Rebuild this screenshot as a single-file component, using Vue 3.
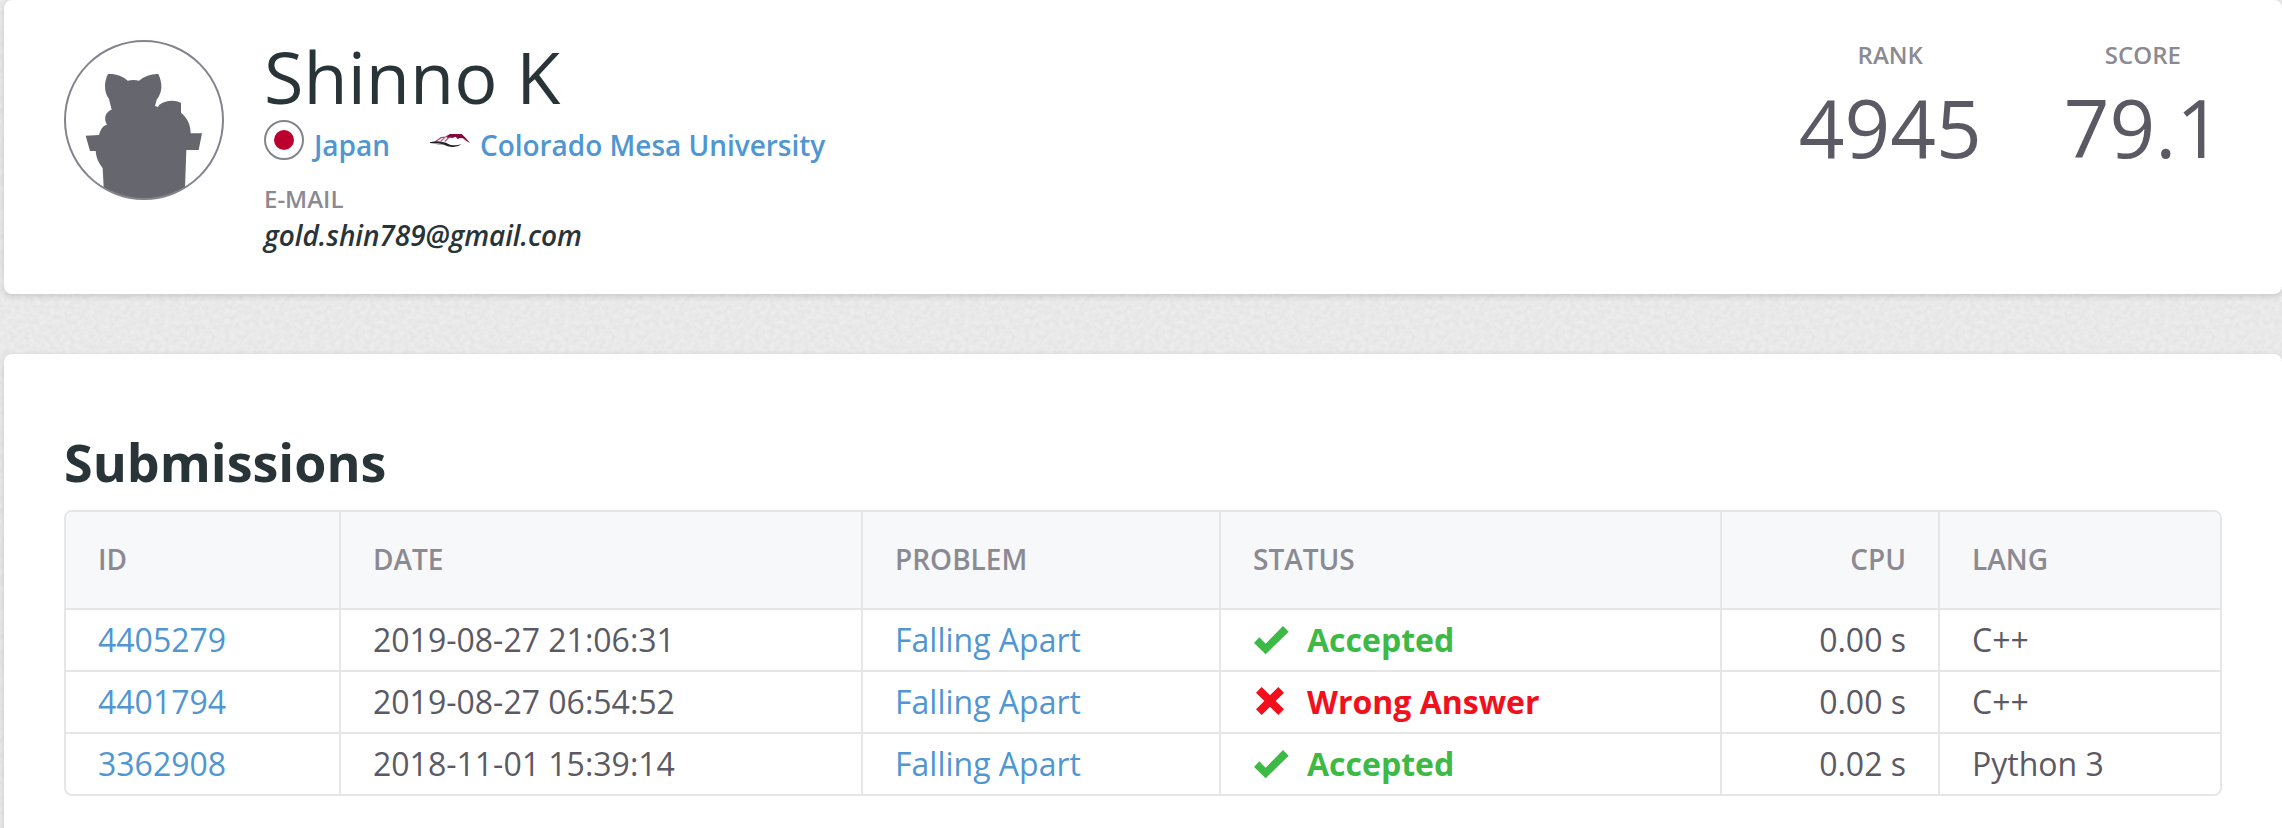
<script setup>
const stats = [
  { label: 'Rank', value: '4945' },
  { label: 'Score', value: '79.1' },
]

const submissions = [
  { id: '4405279', date: '2019-08-27 21:06:31', problem: 'Falling Apart', status: 'Accepted', ok: true, cpu: '0.00 s', lang: 'C++' },
  { id: '4401794', date: '2019-08-27 06:54:52', problem: 'Falling Apart', status: 'Wrong Answer', ok: false, cpu: '0.00 s', lang: 'C++' },
  { id: '3362908', date: '2018-11-01 15:39:14', problem: 'Falling Apart', status: 'Accepted', ok: true, cpu: '0.02 s', lang: 'Python 3' },
]
</script>

<template>
  <main class="page">
    <section class="card profile">
      <svg class="avatar" viewBox="192 120 480 480" aria-hidden="true">
        <clipPath id="avatar-clip"><circle cx="432" cy="360" r="238" /></clipPath>
        <path
          clip-path="url(#avatar-clip)"
          fill="#66666f"
          d="M324 222C348 221 368 228 383 242Q400 238 417 242C434 228 455 221 475 222C487 248 489 275 470 299L465 318L474 321L478 314C498 300 525 299 543 309V338C562 354 572 374 572 400H606L596 450H559L553 620H314L308 505C295 488 288 472 287 453H270L257 407L297 405C301 390 308 376 321 374C310 357 316 335 335 329L327 297C311 275 312 245 324 222Z"
        />
        <circle cx="432" cy="360" r="237" fill="none" stroke="#84838d" stroke-width="6" />
      </svg>

      <div class="identity">
        <h1>Shinno K</h1>
        <div class="affiliations">
          <a class="affiliation" href="#">
            <svg class="badge" viewBox="0 0 40 40" aria-hidden="true">
              <circle cx="20" cy="20" r="19" fill="#fff" stroke="#85848e" stroke-width="2" />
              <circle cx="20" cy="20" r="10" fill="#bc002d" />
            </svg>
            <span>Japan</span>
          </a>
          <a class="affiliation" href="#">
            <svg class="badge" viewBox="30 0 120 120" aria-hidden="true">
              <path fill="none" stroke="#a84a70" stroke-width="3.5" d="M46 65L63 53L76 51L90 44M62 64L74 53M74 65L86 53L99 51" />
              <path fill="#86063c" d="M82 48L90 42H125L135 52L150 69L139 63L129 55L120 54L113 57L107 50L97 54L92 50L80 54Z" />
              <path fill="#222" d="M30 67Q48 62 64 65Q78 67 90 74Q107 78 125 72Q112 83 95 81Q82 79 72 74Q54 70 30 69Z" />
              <path fill="#999" d="M31 69Q52 68 72 73L56 74Q44 71 31 69Z" />
            </svg>
            <span>Colorado Mesa University</span>
          </a>
        </div>
        <div class="label email-label">E-mail</div>
        <div class="email">gold.shin789@gmail.com</div>
      </div>

      <div class="stats">
        <div v-for="s in stats" :key="s.label" class="stat">
          <div class="label">{{ s.label }}</div>
          <div class="value">{{ s.value }}</div>
        </div>
      </div>
    </section>

    <section class="card submissions">
      <h2>Submissions</h2>
      <div class="frame">
        <table>
          <colgroup>
            <col class="c-id" /><col class="c-date" /><col class="c-problem" />
            <col class="c-status" /><col class="c-cpu" /><col class="c-lang" />
          </colgroup>
          <thead>
            <tr>
              <th>ID</th><th>Date</th><th>Problem</th><th>Status</th><th class="right">CPU</th><th>Lang</th>
            </tr>
          </thead>
          <tbody>
            <tr v-for="s in submissions" :key="s.id">
              <td><a href="#">{{ s.id }}</a></td>
              <td>{{ s.date }}</td>
              <td><a href="#">{{ s.problem }}</a></td>
              <td>
                <div class="status" :class="s.ok ? 'accepted' : 'rejected'">
                  <svg viewBox="0 0 108 108" aria-hidden="true">
                    <path v-if="s.ok" d="M3 63L19 46L38 65L90 12L107 29L38 97Z" />
                    <path v-else d="M26 9L51 34L76 9L93 26L68 51L93 76L76 93L51 68L26 93L9 76L34 51L9 26Z" />
                  </svg>
                  <span>{{ s.status }}</span>
                </div>
              </td>
              <td class="right">{{ s.cpu }}</td>
              <td>{{ s.lang }}</td>
            </tr>
          </tbody>
        </table>
      </div>
    </section>
  </main>
</template>

<style>
html {
  overflow: hidden;
}
</style>

<style scoped>
.page {
  box-sizing: border-box;
  height: 828px;
  overflow: hidden;
  padding-left: 4px;
  display: flex;
  flex-direction: column;
  gap: 60px;
  font-family: "Open Sans", "Noto Sans", sans-serif;
  color: #5b5a64;
  background: #e9e9e9 url("data:image/svg+xml,%3Csvg xmlns='http://www.w3.org/2000/svg' width='400' height='400'%3E%3Cfilter id='n' x='0' y='0' width='100%25' height='100%25' color-interpolation-filters='sRGB'%3E%3CfeTurbulence type='fractalNoise' baseFrequency='.2' numOctaves='2' stitchTiles='stitch'/%3E%3CfeColorMatrix values='.06 0 0 0 .883 .06 0 0 0 .883 .06 0 0 0 .883 0 0 0 0 1'/%3E%3C/filter%3E%3Crect width='400' height='400' filter='url(%23n)'/%3E%3C/svg%3E");
}
.card {
  box-sizing: border-box;
  background: #fff;
  border-radius: 8px;
  box-shadow: 0 2px 6px rgba(0, 0, 0, 0.15);
}
a {
  color: #5096d2;
  text-decoration: none;
}
.profile {
  height: 294px;
  flex: none;
  padding: 36px 60px 0;
  display: flex;
  align-items: flex-start;
}
.avatar {
  width: 160px;
  height: 160px;
  margin: 4px 40px 0 0;
  flex: none;
}
h1 {
  margin: 0;
  font-size: 72px;
  line-height: 80px;
  font-weight: 400;
  color: #293438;
}
.affiliations {
  display: flex;
  height: 40px;
  margin-top: 4px;
  gap: 40px;
  font-size: 28px;
  line-height: 50px;
  font-weight: 600;
  letter-spacing: -0.03px;
}
.affiliation {
  display: flex;
  gap: 10px;
}
.badge {
  width: 40px;
  height: 40px;
}
.label {
  font-size: 24px;
  line-height: 32px;
  font-weight: 600;
  text-transform: uppercase;
  color: #8b8a93;
}
.email-label {
  margin-top: 23px;
}
.email {
  margin-top: 2px;
  font-size: 28px;
  line-height: 36px;
  font-weight: 600;
  font-style: italic;
  letter-spacing: -0.05px;
  color: #293438;
}
.stats {
  margin-left: auto;
  padding-top: 3px;
  display: flex;
  gap: 82px;
  text-align: center;
}
.value {
  margin-top: 6px;
  font-size: 80px;
  line-height: 100px;
}
.submissions {
  height: 520px;
  flex: none;
  padding: 72px 60px 0;
}
h2 {
  margin: 0 0 12px;
  font-size: 52px;
  line-height: 72px;
  font-weight: 700;
  color: #293438;
}
.frame {
  border: 2px solid #e6e6e6;
  border-radius: 8px;
  overflow: hidden;
}
table {
  width: 100%;
  table-layout: fixed;
  border-collapse: separate;
  border-spacing: 0;
}
.c-id { width: 275px; }
.c-date { width: 522px; }
.c-problem { width: 358px; }
.c-status { width: 501px; }
.c-cpu { width: 218px; }
.c-lang { width: 280px; }
th,
td {
  box-sizing: border-box;
  padding: 0 32px;
  text-align: left;
  vertical-align: middle;
  border-right: 2px solid #e6e6e6;
  border-bottom: 2px solid #e6e6e6;
}
th:last-child,
td:last-child {
  border-right: 0;
}
th {
  height: 98px;
  padding-bottom: 2px;
  background: #f7f8fa;
  font-size: 28px;
  line-height: 40px;
  font-weight: 600;
  text-transform: uppercase;
  color: #8b8a93;
}
td {
  height: 62px;
  font-size: 32px;
  line-height: 44px;
}
tbody tr:last-child td {
  height: 60px;
  border-bottom: 0;
}
.right {
  text-align: right;
}
.status {
  display: flex;
  align-items: center;
  gap: 18px;
  font-weight: 700;
}
.status svg {
  width: 36px;
  height: 36px;
  fill: currentColor;
}
.accepted { color: #3cba45; }
.rejected { color: #f1101c; }
</style>
